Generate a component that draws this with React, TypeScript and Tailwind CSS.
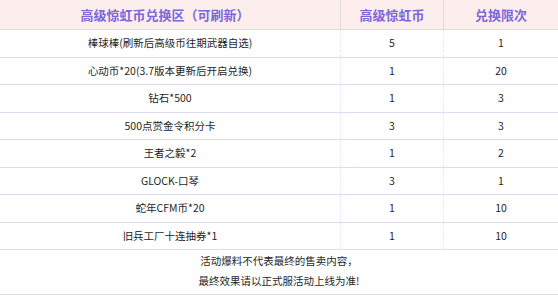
import React from 'react';

interface ExchangeRow {
  name: string;
  cost: string;
  limit: string;
}

const rows: ExchangeRow[] = [
  { name: '棒球棒(刷新后高级币往期武器自选)', cost: '5', limit: '1' },
  { name: '心动币*20(3.7版本更新后开启兑换)', cost: '1', limit: '20' },
  { name: '钻石*500', cost: '1', limit: '3' },
  { name: '500点赏金令积分卡', cost: '3', limit: '3' },
  { name: '王者之毅*2', cost: '1', limit: '2' },
  { name: 'GLOCK-口琴', cost: '3', limit: '1' },
  { name: '蛇年CFM币*20', cost: '1', limit: '10' },
  { name: '旧兵工厂十连抽券*1', cost: '1', limit: '10' },
];

const App: React.FC = () => {
  return (
    <div
      className="w-[558px] h-[297px] bg-white text-[#1f1f1f]"
      style={{ fontFamily: '"Noto Sans CJK SC", "Noto Sans", sans-serif' }}
    >
      {/* Header */}
      <div className="flex h-[30px] bg-[#fdeeee] border-b border-[#dedada] text-[13px] font-bold text-[#7c67d8]">
        <div className="w-[340px] flex items-center justify-center pr-[10px]">
          高级惊虹币兑换区（可刷新）
        </div>
        <div className="w-[103px] flex items-center justify-center border-l border-[#e0dada]">
          高级惊虹币
        </div>
        <div className="flex-1 flex items-center justify-center border-l border-[#e0dada]">
          兑换限次
        </div>
      </div>

      {/* Rows */}
      {rows.map((row) => (
        <div
          key={row.name}
          className="flex h-[27.5px] border-b border-[#e0d9f3] text-[10.5px]"
        >
          <div className="w-[340px] flex items-center justify-center">{row.name}</div>
          <div className="w-[103px] flex items-center justify-center border-l border-dashed border-[#fbe3ea]">
            {row.cost}
          </div>
          <div className="flex-1 flex items-center justify-center border-l border-dashed border-[#fbe3ea]">
            {row.limit}
          </div>
        </div>
      ))}

      {/* Footer note */}
      <div className="pt-[1px] pb-[3px] border-b border-[#e0d9f3] text-center text-[10.5px] leading-[20px]">
        <p>活动爆料不代表最终的售卖内容，</p>
        <p>最终效果请以正式服活动上线为准!</p>
      </div>
    </div>
  );
};

export default App;
